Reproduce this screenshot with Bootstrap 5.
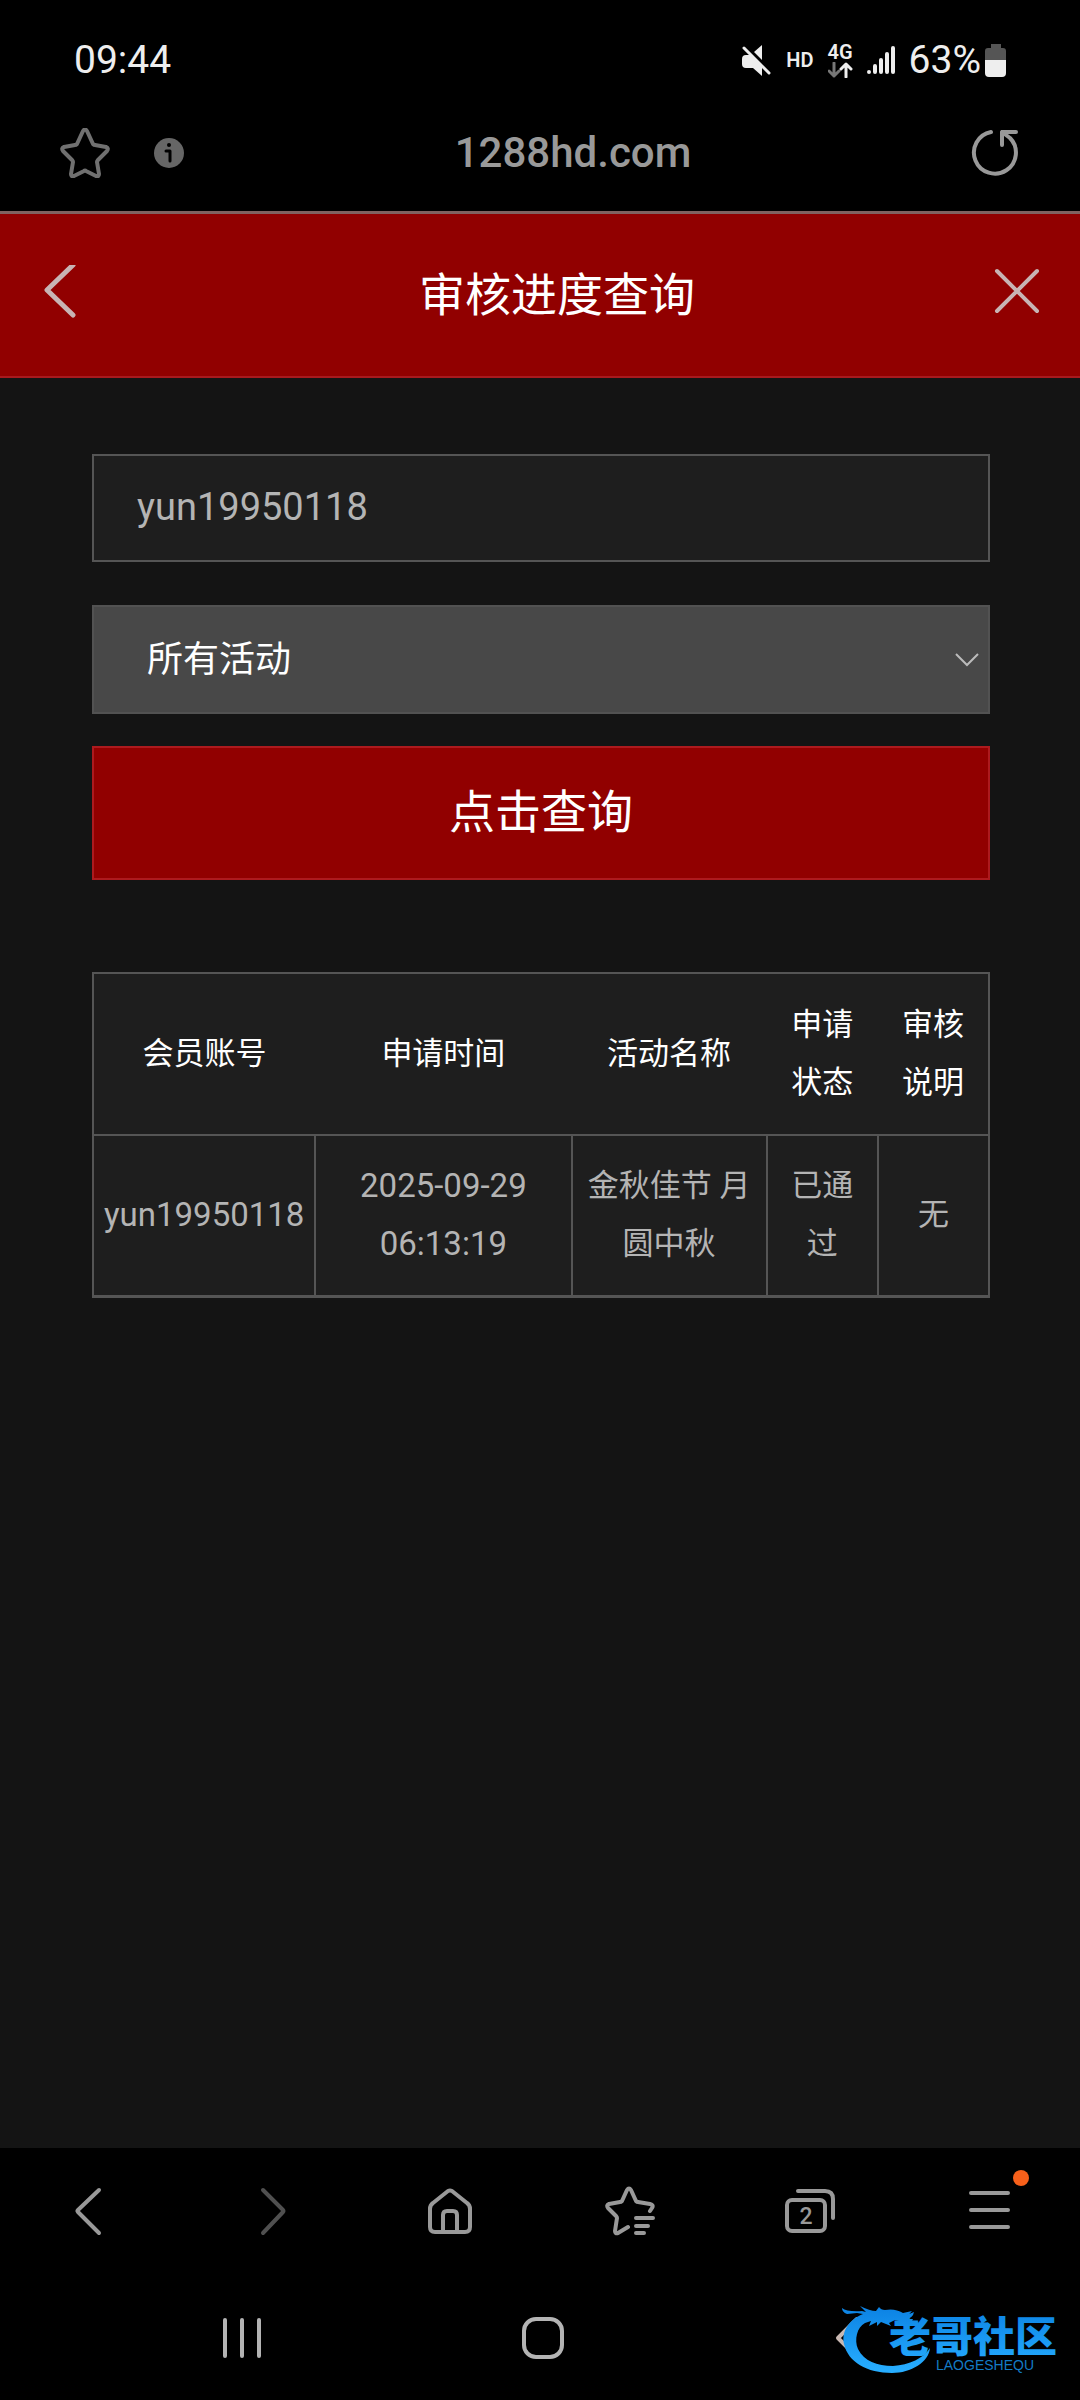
<!DOCTYPE html>
<html lang="zh-CN">
<head>
<meta charset="utf-8">
<meta name="viewport" content="width=device-width, initial-scale=1">
<title>审核进度查询</title>
<link href="https://cdn.jsdelivr.net/npm/bootstrap@5.3.0/dist/css/bootstrap.min.css" rel="stylesheet">
<style>
body{background:#141414;color:#fff;font-family:Roboto,"Noto Sans CJK SC",sans-serif}
svg{display:block;flex:none;fill:none;stroke-linecap:round;stroke-linejoin:round}
.plain{background:none;border:0;padding:0;color:inherit;display:block}
.status-bar{padding:37px 73px 0 74px;font-size:39px;line-height:46px;color:#eee}
.status-icons{gap:14px}
.net-tag{font-size:20px;line-height:20px;font-weight:600}
.url-bar{padding:43px 60px 31px;color:#999;border-bottom:3px solid #806260}
.url-start{gap:44px}
.url-text{font-size:42px;line-height:54px;font-weight:500;padding-right:8px}
.page-head{background:#910000;border-bottom:2px solid #a8191e;padding:51px 40px;color:#c8b4b4}
.page-head h1{font-size:46px;line-height:60px;font-weight:400;color:#fff;padding-left:40px}
.content{padding:76px 90px 76px 92px}
.field{border:2px solid #555;border-radius:0;font-size:38px;line-height:56px;padding:23px 43px 25px}
.field-name,.field-name:focus{background:#1e1e1e;color:#b4b4b4;margin-bottom:43px}
.field-type,.field-type:focus{font-size:36px;padding:25px 53px 24px;color:#fff;margin-bottom:32px;border-color:#525252;background:#484848 url("data:image/svg+xml,%3Csvg xmlns='http://www.w3.org/2000/svg' viewBox='0 0 24 14'%3E%3Cpath d='M1 1l11 11L23 1' fill='none' stroke='%23bbb' stroke-width='2'/%3E%3C/svg%3E") no-repeat right 9px center/24px 14px}
.btn-query,.btn-query:hover{background:#910000;border:2px solid #ad1a1e;border-radius:0;color:#fff;font-size:46px;line-height:60px;padding:34px 0 36px;margin-bottom:92px}
.results{table-layout:fixed;width:100%;border:2px solid #555;background:#1e1e1e;text-align:center;font-size:31px;line-height:58px;margin:0}
.results th,.results td{vertical-align:middle;padding:22px 10px}
.results td{padding:21px 10px 22px}
.results th{font-weight:400;color:#fff}
.results td{border:2px solid #555;border-bottom-width:3px;color:#b4b4b4}
.results tbody tr{border-top:1px solid #555}
.results .latin{font-size:33px}
.c1{width:222px}.c2{width:256px}.c3{width:195px}.c4,.c5{width:111px}
.phone-foot{background:#000;color:#999;padding:38px 0 37px}
.sys-nav{padding:77px 84px 0 91px;color:#b4b4b4}
.tab-num{font:500 23px Roboto,sans-serif}
.site-logo{right:0;bottom:0}
.logo-cn{font:900 42px "Noto Sans CJK SC",sans-serif}
.logo-en{font:14px "Liberation Sans",sans-serif}
</style>
<script src="https://cdn.jsdelivr.net/npm/bootstrap@5.3.0/dist/js/bootstrap.bundle.min.js"></script>
</head>
<body class="d-flex flex-column min-vh-100">
<header>
  <div class="bg-black">
    <div class="status-bar d-flex justify-content-between align-items-center">
      <span>09:44</span>
      <div class="status-icons d-flex align-items-center">
        <svg width="32" height="32" viewBox="0 0 32 32"><path d="M2 15q0-4 4-4h4l12 12v9l-9-8H6q-4 0-4-4zM14 8l8-7v15z" fill="currentColor"/><path d="M4 4l25 25" stroke="currentColor" stroke-width="3"/></svg>
        <span class="net-tag">HD</span>
        <div>
          <div class="net-tag">4G</div>
          <svg width="25" height="16" viewBox="0 0 25 16" stroke-width="3"><path d="M6 1v13M1 9l5 5 5-5" stroke="#777"/><path d="M18 15V2M13 7l5-5 5 5" stroke="currentColor"/></svg>
        </div>
        <svg width="28" height="28" viewBox="0 0 28 28" stroke="currentColor" stroke-width="4"><path d="M2 26h0M8 20v6M14 14v12M20 8v18M26 2v24"/></svg>
        <div class="d-flex align-items-center">
          <span>63%</span>
          <svg class="ms-1" width="22" height="34" viewBox="0 0 22 34"><path d="M6 1h10v4h2q3 0 3 3v9H0V8q0-3 3-3h3z" fill="#555"/><path d="M0 17h21v13q0 4-4 4H4q-4 0-4-4z" fill="currentColor"/></svg>
        </div>
      </div>
    </div>
    <div class="url-bar d-flex align-items-center">
      <div class="url-start d-flex align-items-center">
        <button class="plain" aria-label="收藏"><svg width="50" height="50" viewBox="0 0 50 50" stroke="#707070" stroke-width="4"><path d="M23 3q2-3 4 0l6 13q1 1 2 1l11 2q3 1 1 4l-9 9q-1 1-1 2l2 12q0 3-3 2l-10-5q-1-1-2 0l-10 5q-3 1-3-2l2-12q0-1-1-2l-9-9q-2-3 1-4l11-2q1 0 2-1z"/></svg></button>
        <svg width="30" height="30" viewBox="0 0 30 30"><circle cx="15" cy="15" r="15" fill="#666"/><circle cx="15" cy="7" r="2" fill="#000"/><path d="M12 13h4v10" stroke="#000" stroke-width="3"/></svg>
      </div>
      <span class="url-text flex-grow-1 text-center">1288hd.com</span>
      <button class="plain" aria-label="刷新"><svg width="50" height="50" viewBox="0 0 50 50" stroke="currentColor" stroke-width="4"><path d="M21 4a21 21 0 1 0 19 6M32 17V4h14M32 4l8 6"/></svg></button>
    </div>
  </div>
  <div class="page-head d-flex align-items-center">
    <button class="plain" aria-label="返回"><svg width="40" height="60" viewBox="0 0 40 60" stroke="currentColor" stroke-width="5"><path d="M33 0L7 25l26 25"/></svg></button>
    <h1 class="flex-grow-1 text-center m-0">审核进度查询</h1>
    <button class="plain" aria-label="关闭"><svg width="46" height="60" viewBox="0 0 46 60" stroke="currentColor" stroke-width="4"><path d="M3 6l40 40M43 6L3 46"/></svg></button>
  </div>
</header>
<main class="content flex-grow-1">
  <form onsubmit="return false">
    <input class="form-control field field-name" type="text" value="yun19950118" aria-label="会员账号">
    <select class="form-select field field-type" aria-label="活动名称"><option>所有活动</option></select>
    <button class="btn btn-query w-100 d-block" type="submit">点击查询</button>
  </form>
  <table class="results">
    <colgroup><col class="c1"><col class="c2"><col class="c3"><col class="c4"><col class="c5"></colgroup>
    <thead><tr><th>会员账号</th><th>申请时间</th><th>活动名称</th><th>申请<br>状态</th><th>审核<br>说明</th></tr></thead>
    <tbody><tr><td class="latin">yun19950118</td><td class="latin">2025-09-29 06:13:19</td><td>金秋佳节 月圆中秋</td><td>已通过</td><td>无</td></tr></tbody>
  </table>
</main>
<footer class="phone-foot position-relative">
  <nav class="row row-cols-6 g-0 justify-content-center">
    <div class="col d-flex justify-content-center"><button class="plain" aria-label="后退"><svg width="50" height="50" viewBox="0 0 50 50" stroke="currentColor" stroke-width="4"><path d="M34 4L13 24q-1 1 0 2l21 21"/></svg></button></div>
    <div class="col d-flex justify-content-center"><button class="plain" aria-label="前进"><svg width="50" height="50" viewBox="0 0 50 50" stroke="#505050" stroke-width="4"><path d="M18 4l20 20q1 1 0 2L18 47"/></svg></button></div>
    <div class="col d-flex justify-content-center"><button class="plain" aria-label="主页"><svg width="50" height="50" viewBox="0 0 50 50" stroke="currentColor" stroke-width="4"><path d="M5 23q0-4 3-6L23 5q2-1 4 0l15 12q3 2 3 6v18q0 5-5 5H10q-5 0-5-5zM18 45V29q0-4 4-4h6q4 0 4 4v16"/></svg></button></div>
    <div class="col d-flex justify-content-center"><button class="plain" aria-label="书签"><svg width="50" height="50" viewBox="0 0 50 50" stroke="currentColor" stroke-width="4"><path d="M23 41l-10 6q-3 1-3-2l2-13q0-1-1-2l-8-8q-2-3 1-4l11-2q1 0 2-1l5-11q2-3 4 0l5 11q1 1 2 1l12 2q4 1 2 4l-2 3M31 32h17M31 40h12M31 47h8"/></svg></button></div>
    <div class="col d-flex justify-content-center"><button class="plain" aria-label="标签页"><svg width="52" height="50" viewBox="0 0 52 50" stroke="currentColor" stroke-width="4"><rect x="3" y="14" width="38" height="31" rx="5"/><path d="M14 5h27q8 0 8 8v19"/><text class="tab-num" x="22" y="38" text-anchor="middle" fill="currentColor" stroke="none">2</text></svg></button></div>
    <div class="col d-flex justify-content-center"><button class="plain position-relative" aria-label="菜单"><svg width="78" height="50" viewBox="0 0 78 50" stroke="currentColor" stroke-width="4"><path d="M20 7h37M20 24h37M20 41h37"/></svg><svg class="position-absolute end-0 bottom-100 mb-n3" width="16" height="16" viewBox="0 0 16 16"><circle cx="8" cy="8" r="8" fill="#f8601a"/></svg></button></div>
  </nav>
  <nav class="sys-nav row row-cols-3 g-0">
    <div class="col d-flex justify-content-center"><button class="plain" aria-label="最近任务"><svg width="50" height="50" viewBox="0 0 50 50" stroke="currentColor" stroke-width="4"><path d="M8 7v36M25 7v36M42 7v36"/></svg></button></div>
    <div class="col d-flex justify-content-center"><button class="plain" aria-label="桌面"><svg width="50" height="50" viewBox="0 0 50 50" stroke="currentColor" stroke-width="4"><rect x="6" y="6" width="38" height="38" rx="12"/></svg></button></div>
    <div class="col d-flex justify-content-center"><button class="plain" aria-label="返回上级"><svg width="50" height="50" viewBox="0 0 50 50" stroke="#c8b8b2" stroke-width="4"><path d="M37 6L18 25l19 19"/></svg></button></div>
  </nav>
  <svg class="site-logo position-absolute" width="260" height="120" viewBox="0 0 260 120" role="img" aria-label="老哥社区">
    <defs><linearGradient id="blue" gradientUnits="userSpaceOnUse" x1="0" y1="28" x2="0" y2="90"><stop offset="0" stop-color="#0c83e4"/><stop offset="1" stop-color="#27adff"/></linearGradient></defs>
    <g fill="url(#blue)">
      <path d="M22 28q5 4 20 3l4 1-6-6q10 5 16 5l3-4q2 3 6 3 10-2 18 3l9-2q-2 3-5 4l7-3q-1 6-8 7h7l-2 4-8-1-8-2-6 3 2 3-10-4-4 4v-4l-8 4 2-5-6 2C37 47 34 60 38 69c6 12 19 17 35 17 16-1 31-8 37-18-1 14-19 25-38 25-25 0-44-11-48-29-3-13 6-25 19-30l-6-1-10 1q-5-2-5-6z"/>
      <text class="logo-cn" x="69" y="72">老哥社区</text>
      <text class="logo-en" x="116" y="90" fill="#137bc6">LAOGESHEQU</text>
    </g>
  </svg>
</footer>
</body>
</html>
